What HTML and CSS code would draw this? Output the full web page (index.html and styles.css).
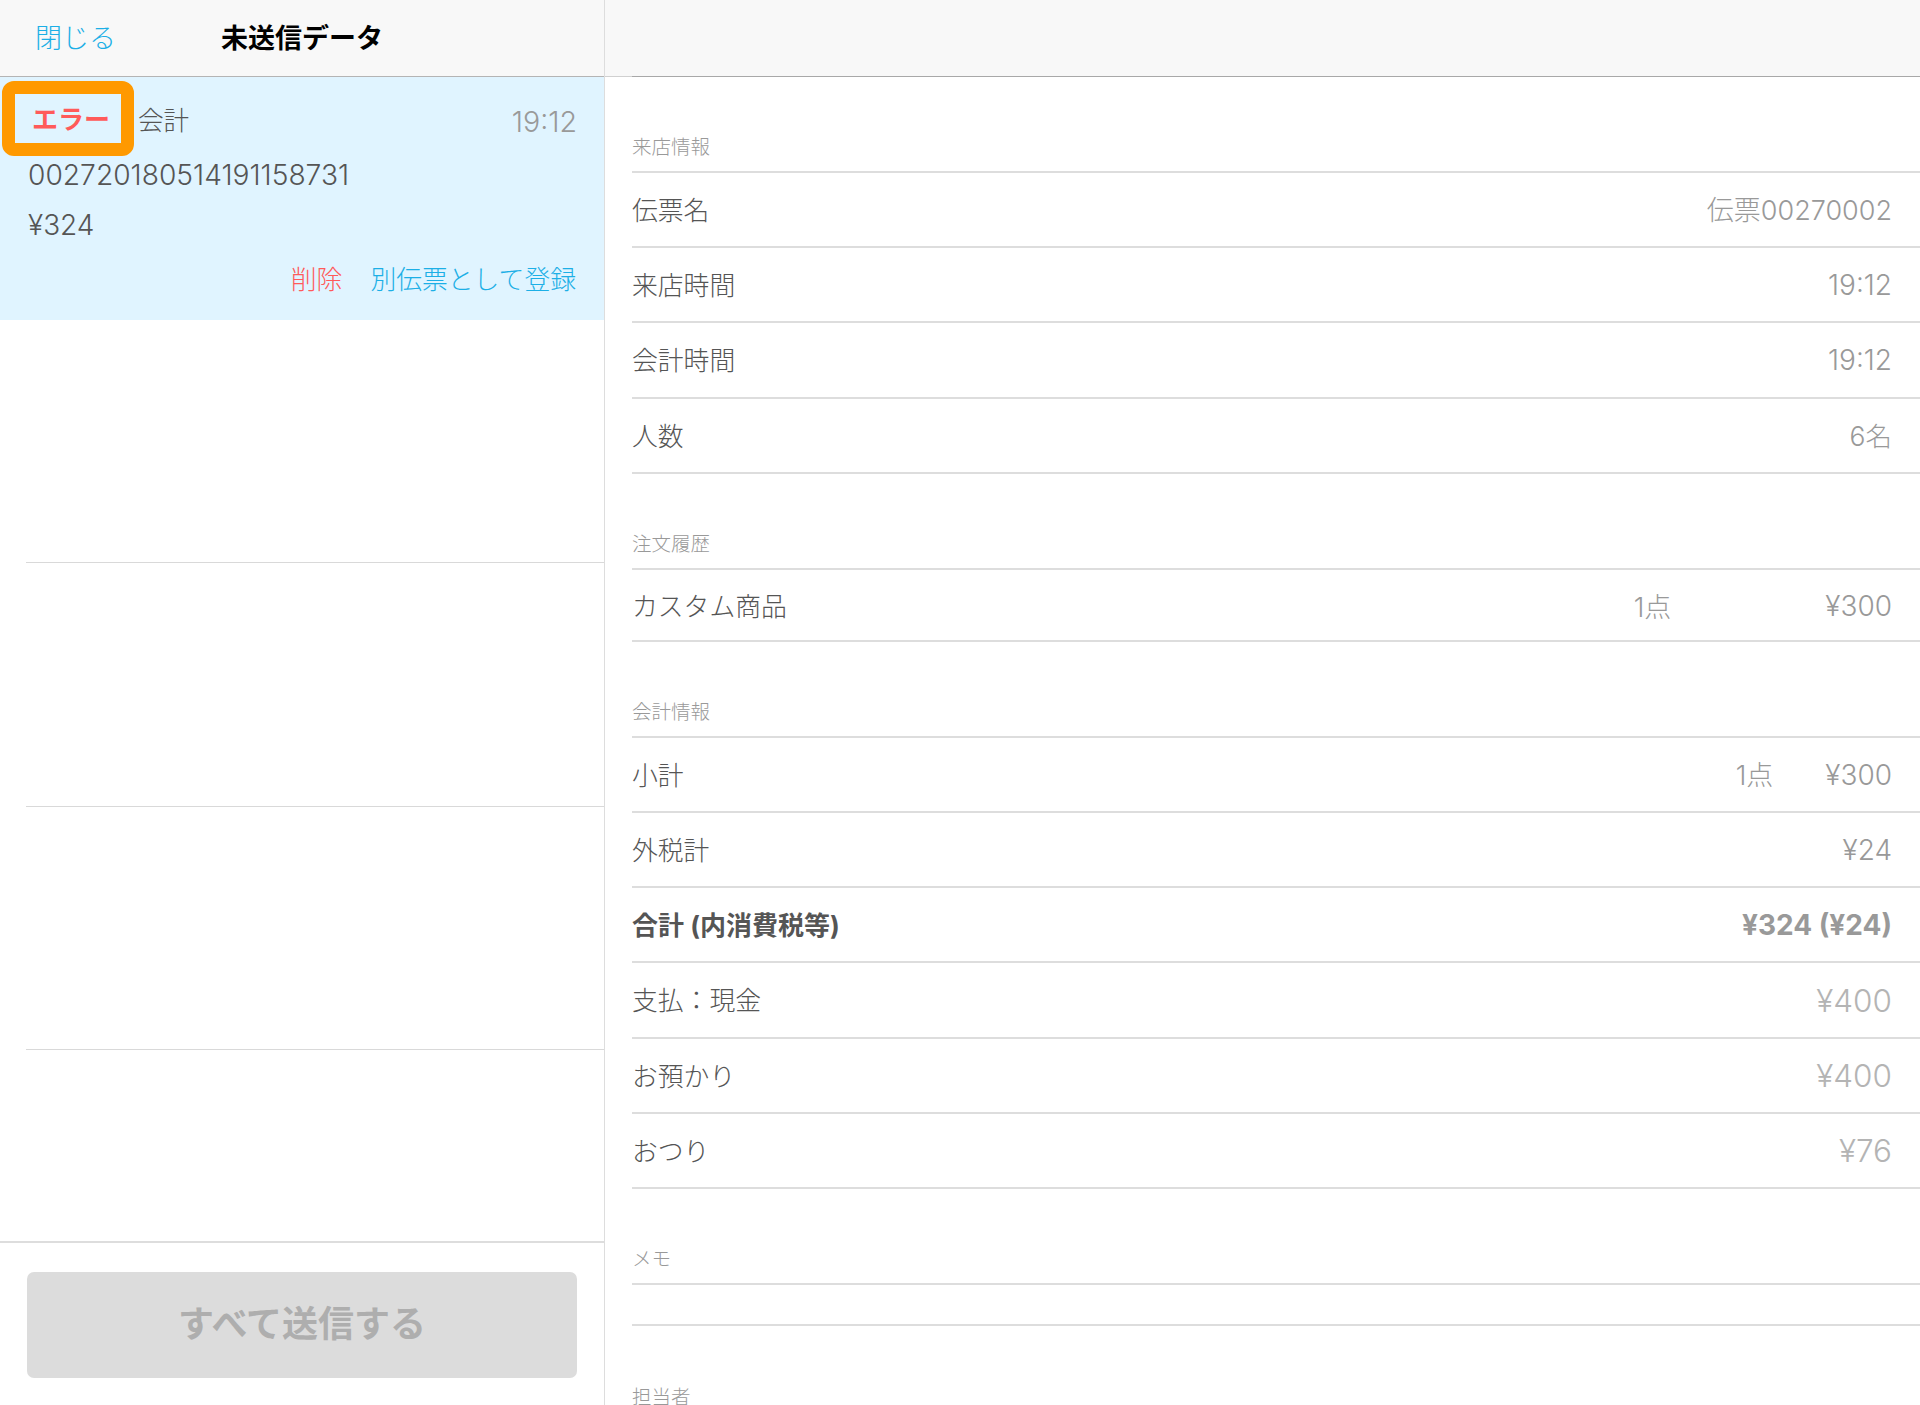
FILE: index.html
```html
<!DOCTYPE html>
<html lang="ja">
<head>
<meta charset="utf-8">
<title>未送信データ</title>
<link rel="stylesheet" href="styles.css">
</head>
<body>
<div class="app">
  <aside class="left">
    <header class="lhead">
      <a class="close">閉じる</a>
      <h1 class="title">未送信データ</h1>
    </header>
    <div class="list">
      <div class="entry selected">
        <div class="entry-top">
          <span class="badge">エラー</span>
          <span class="kind">会計</span>
          <span class="time">19:12</span>
        </div>
        <div class="slip">002720180514191158731</div>
        <div class="price">¥324</div>
        <div class="actions"><a class="del">削除</a><a class="reg">別伝票として登録</a></div>
      </div>
      <div class="entry"></div>
      <div class="entry"></div>
      <div class="entry"></div>
    </div>
    <footer class="lfoot"><button class="sendall">すべて送信する</button></footer>
  </aside>
  <main class="right">
    <header class="rhead"></header>
    <section class="sec first">
      <h2>来店情報</h2>
      <div class="row"><span>伝票名</span><span class="val name">伝票00270002</span></div>
      <div class="row"><span>来店時間</span><span class="val">19:12</span></div>
      <div class="row"><span>会計時間</span><span class="val">19:12</span></div>
      <div class="row"><span>人数</span><span class="val count">6名</span></div>
    </section>
    <section class="sec orders">
      <h2>注文履歴</h2>
      <div class="row short"><span>カスタム商品</span><span class="qty wide">1点</span><span class="val">¥300</span></div>
    </section>
    <section class="sec pay">
      <h2>会計情報</h2>
      <div class="row"><span>小計</span><span class="qty">1点</span><span class="val">¥300</span></div>
      <div class="row"><span>外税計</span><span class="val">¥24</span></div>
      <div class="row total"><span>合計 (内消費税等)</span><span class="val">¥324 (¥24)</span></div>
      <div class="row"><span>支払：現金</span><span class="val big">¥400</span></div>
      <div class="row"><span>お預かり</span><span class="val big">¥400</span></div>
      <div class="row"><span>おつり</span><span class="val big">¥76</span></div>
    </section>
    <section class="sec memo">
      <h2>メモ</h2>
      <div class="row blank"></div>
    </section>
    <section class="sec staff">
      <h2>担当者</h2>
    </section>
  </main>
</div>
</body>
</html>
```

FILE: styles.css
```css
* { box-sizing: border-box; }
html, body { margin: 0; padding: 0; height: 100%; overflow: hidden; background: #fff; }
body { font-family: Inter, "Noto Sans CJK JP", sans-serif; font-weight: 300; color: #555; }
.app { display: flex; width: 1920px; height: 1405px; overflow: hidden; }
.left { width: 605px; height: 1405px; border-right: 1px solid #ddd; display: flex; flex-direction: column; }
.lhead { height: 77px; padding-bottom: 3px; background: #f8f8f8; border-bottom: 1px solid #b4b4b4; display: flex; align-items: center; position: relative; }
.close { margin-left: 35px; font-size: 27px; color: #1cafe6; }
.title { margin: 0; position: absolute; left: 0; right: 0; text-align: center; font-size: 27px; font-weight: 700; color: #000; }
.list { flex: 1; min-height: 0; overflow: hidden; }
.entry { height: 243.5px; position: relative; }
.entry::after { content: ""; position: absolute; left: 26px; right: 0; bottom: 0; height: 1px; background: #d9d9d9; }
.selected { height: 242.5px; background: #e0f4ff; padding: 0 28px; }
.selected::after { display: none; }
.entry-top { display: flex; align-items: center; height: 80px; }
.badge { position: absolute; left: 2px; top: 4px; width: 132px; height: 75px; border: 13px solid #ff9900; border-radius: 12px; padding-left: 6px; padding-bottom: 2px; font-size: 26px; font-weight: 700; color: #ff5a5a; display: flex; align-items: center; justify-content: center; }
.kind { margin-left: 110px; padding-top: 2px; font-size: 25.6px; }
.time { margin-left: auto; margin-right: -1px; padding-top: 9px; font-size: 28.6px; color: #999; }
.slip { font-size: 28.2px; line-height: 34px; margin-top: 1px; }
.price { font-size: 28px; line-height: 34px; margin-top: 16px; }
.actions { display: flex; justify-content: flex-end; gap: 28px; margin-top: 20px; font-size: 25.8px; line-height: 36px; }
.del { color: #ff5a5a; }
.reg { color: #1cafe6; }
.lfoot { height: 164px; border-top: 2px solid #ddd; padding: 29px 27px 0; }
.sendall { display: block; width: 550px; height: 106px; background: #dcdcdc; border: 0; border-radius: 7px; font-family: inherit; font-size: 36px; font-weight: 700; color: #aeaeae; padding: 0 0 8px; }
.right { flex: 1; padding-left: 27px; min-width: 0; }
.rhead { height: 77px; margin-left: -27px; background: #f8f8f8; border-bottom: 1px solid #d0d0d0; position: relative; }
.rhead::after { content: ""; position: absolute; left: 27px; right: 0; bottom: -1px; height: 1px; background: #a8a8a8; }
.sec h2 { margin: 0; font-size: 19.5px; font-weight: 300; color: #999; height: 39px; line-height: 27px; padding-bottom: 10px; border-bottom: 2px solid #ddd; }
.first { margin-top: 57px; }
.orders { margin-top: 57px; }
.pay { margin-top: 56.5px; }
.memo { margin-top: 57px; }
.staff { margin-top: 58px; }
.row { height: 75.2px; display: flex; align-items: center; justify-content: space-between; border-bottom: 2px solid #ddd; padding-right: 28px; padding-bottom: 2px; font-size: 25.8px; color: #555; }
.row.short { height: 72.5px; }
.row.blank { height: 41px; }
.val { color: #999; font-size: 28px; padding-top: 3px; }
.qty { color: #999; margin-left: auto; margin-right: 52px; font-size: 27px; }
.qty.wide { margin-right: 154px; padding-top: 2px; }
.val.name { font-size: 27px; padding-top: 0; }
.val.count { font-size: 26.5px; padding-top: 0; }
.val.big { color: #b4b4b4; font-size: 31.5px; }
.total { font-weight: 700; font-size: 26px; }
.total .val { font-weight: 700; font-size: 28px; }
```
